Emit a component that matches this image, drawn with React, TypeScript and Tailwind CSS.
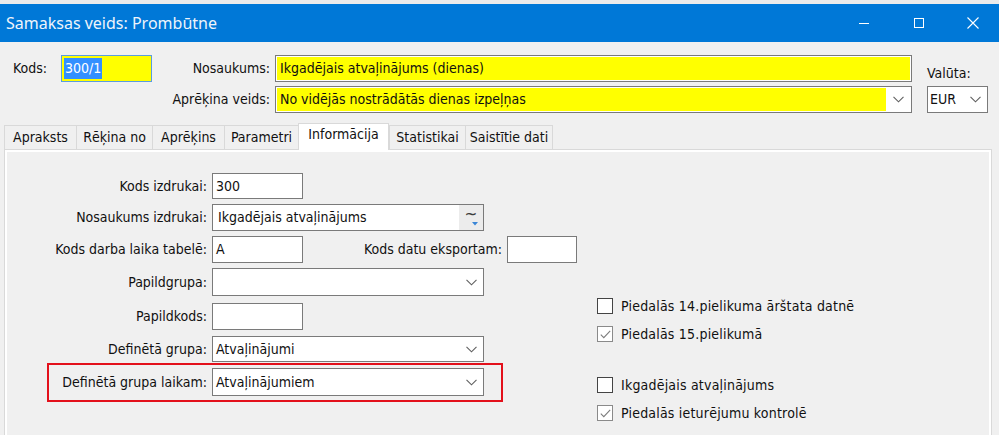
import { ReactNode } from "react";

// Thin grey chevron used by every combo box
function Chevron() {
  return (
    <svg width="11" height="7" viewBox="0 0 11 7">
      <polyline points="0.5,0.8 5.5,5.8 10.5,0.8" fill="none" stroke="#5f5f5f" strokeWidth="1.1" />
    </svg>
  );
}

function TextBox({ width, value, className }: { width: string; value?: string; className?: string }) {
  return (
    <div className={`${width} h-full border border-[#7a7a7a] bg-white flex items-center pl-[3px] ${className ?? ""}`}>
      {value}
    </div>
  );
}

function ComboBox({ value }: { value?: string }) {
  return (
    <div className="w-[272px] h-full border border-[#7a7a7a] bg-white flex items-center pl-[3px] pr-[6px]">
      <span className="flex-1">{value}</span>
      <Chevron />
    </div>
  );
}

function Label({ children, width }: { children: ReactNode; width: string }) {
  return <div className={`${width} shrink-0 text-right pr-[5px]`}>{children}</div>;
}

function CheckBox({ checked, label, className }: { checked?: boolean; label: string; className?: string }) {
  return (
    <div className={`flex items-center h-[16px] gap-[8px] ${className ?? ""}`}>
      <div
        className={`w-[16px] h-[16px] bg-white border flex items-center justify-center ${
          checked ? "border-[#8a8a8a]" : "border-[#444444]"
        }`}
      >
        {checked && (
          <svg width="11" height="9" viewBox="0 0 11 9">
            <polyline points="0.8,4.6 3.8,7.6 10.2,0.8" fill="none" stroke="#7c7c7c" strokeWidth="1.1" />
          </svg>
        )}
      </div>
      <span className="tracking-[0.2px]">{label}</span>
    </div>
  );
}

const tabs = [
  { label: "Apraksts", w: "w-[72px]" },
  { label: "Rēķina no", w: "w-[76px]" },
  { label: "Aprēķins", w: "w-[72px]" },
  { label: "Parametri", w: "w-[74px]" },
  { label: "Informācija", w: "w-[91px]", active: true },
  { label: "Statistikai", w: "w-[76px]" },
  { label: "Saistītie dati", w: "w-[88px]" },
];

export default function App() {
  return (
    <div className="w-[999px] h-[435px] overflow-hidden bg-[#f0f0f0] text-[14px] leading-[17px] text-[#111111] font-['DejaVu_Sans_Condensed','Liberation_Sans',sans-serif]">
      {/* window frame top */}
      <div className="h-[4px] bg-[#ebebeb]" />

      {/* title bar */}
      <div className="h-[38px] bg-[#0078d7] flex items-center">
        <span className="flex-1 pl-[6px] text-[16px] text-[#eef4fb] font-['Noto_Sans','Open_Sans',sans-serif]">
          Samaksas veids: Prombūtne
        </span>
        <div className="w-[55px] h-full flex items-center justify-center">
          <div className="w-[10px] h-[1px] bg-white" />
        </div>
        <div className="w-[55px] h-full flex items-center justify-center">
          <div className="w-[10px] h-[10px] border border-white" />
        </div>
        <div className="w-[53px] h-full flex items-center justify-center">
          <svg width="12" height="12" viewBox="0 0 12 12">
            <path d="M0.5 0.5 L11.5 11.5 M11.5 0.5 L0.5 11.5" stroke="white" strokeWidth="1.1" />
          </svg>
        </div>
      </div>

      {/* header fields */}
      <div className="flex pt-[13px]">
        <div className="flex flex-col gap-[4px]">
          <div className="flex h-[27px] items-center">
            <div className="w-[61px] pl-[13px]">Kods:</div>
            <div className="w-[91px] h-full border border-[#5a9de0] bg-[#ffff00] flex items-center pl-[2px]">
              <span className="bg-[#3390ff] text-white h-[21px] leading-[21px] px-[1px]">300/1</span>
            </div>
            <Label width="w-[123px]">Nosaukums:</Label>
            <div className="w-[637px] h-full border border-[#7a7a7a] bg-white p-[1px]">
              <div className="h-full bg-[#ffff00] flex items-center pl-[3px]">Ikgadējais atvaļinājums (dienas)</div>
            </div>
          </div>
          <div className="flex h-[27px] items-center">
            <Label width="w-[275px]">Aprēķina veids:</Label>
            <div className="w-[637px] h-full border border-[#7a7a7a] bg-white p-[1px] flex">
              <div className="flex-1 h-full bg-[#ffff00] flex items-center pl-[3px]">
                No vidējās nostrādātās dienas izpeļņas
              </div>
              <div className="w-[24px] flex items-center justify-center">
                <Chevron />
              </div>
            </div>
          </div>
        </div>
        <div className="ml-[15px] flex flex-col">
          <div className="h-[31px] flex items-end pb-[4px]">Valūta:</div>
          <div className="w-[61px] h-[27px] border border-[#7a7a7a] bg-white flex items-center pl-[2px] pr-[6px]">
            <span className="flex-1">EUR</span>
            <Chevron />
          </div>
        </div>
      </div>

      {/* tabs */}
      <div className="flex items-end h-[26px] mt-[10px] pl-[4px]">
        {tabs.map((t, i) =>
          t.active ? (
            <div
              key={t.label}
              className={`${t.w} h-[27px] mb-[-1px] relative z-10 bg-white border border-b-0 border-[#d9d9d9] flex items-center justify-center pb-[5px]`}
            >
              {t.label}
            </div>
          ) : (
            <div
              key={t.label}
              className={`${t.w} h-[24px] border-t border-l border-[#d9d9d9] ${
                i === tabs.length - 1 ? "border-r" : ""
              } bg-[#f0f0f0] flex items-center justify-center`}
            >
              {t.label}
            </div>
          )
        )}
      </div>

      {/* tab page */}
      <div className="ml-[4px] w-[988px] h-[300px] border border-[#d9d9d9] bg-white p-[2px]">
        <div className="h-full bg-[#f0f0f0] flex">
          <div className="flex flex-col pt-[21px] w-[570px]">
            <div className="flex h-[26px] items-center">
              <Label width="w-[205px]">Kods izdrukai:</Label>
              <TextBox width="w-[91px]" value="300" />
            </div>
            <div className="flex h-[27px] items-center mt-[5px]">
              <Label width="w-[205px]">Nosaukums izdrukai:</Label>
              <div className="w-[272px] h-full border border-[#7a7a7a] bg-white flex">
                <div className="flex-1 flex items-center pl-[5px]">Ikgadējais atvaļinājums</div>
                <div className="w-[24px] bg-[#ececec] relative flex justify-center">
                  <span className="text-[17px] leading-[17px] text-[#3c3c3c] mt-[1px]">~</span>
                  <svg width="6" height="4" viewBox="0 0 6 4" className="absolute right-[5px] bottom-[4px]">
                    <polygon points="0,0 6,0 3,3.5" fill="#3a86d6" />
                  </svg>
                </div>
              </div>
            </div>
            <div className="flex h-[27px] items-center mt-[5px]">
              <Label width="w-[205px]">Kods darba laika tabelē:</Label>
              <TextBox width="w-[91px]" value="A" />
              <Label width="w-[204px]">Kods datu eksportam:</Label>
              <TextBox width="w-[70px]" />
            </div>
            <div className="flex h-[28px] items-center mt-[5px]">
              <Label width="w-[205px]">Papildgrupa:</Label>
              <ComboBox />
            </div>
            <div className="flex h-[27px] items-center mt-[7px]">
              <Label width="w-[205px]">Papildkods:</Label>
              <TextBox width="w-[91px]" />
            </div>
            <div className="flex h-[26px] items-center mt-[6px]">
              <Label width="w-[205px]">Definētā grupa:</Label>
              <ComboBox value="Atvaļinājumi" />
            </div>
            <div className="ml-[40px] w-[456px] mt-[1px] border-2 border-[#e3101b] pt-[3px] pb-[4px]">
              <div className="flex h-[28px] items-center">
                <Label width="w-[163px]">Definētā grupa laikam:</Label>
                <ComboBox value="Atvaļinājumiem" />
              </div>
            </div>
          </div>

          <div className="flex flex-col pt-[146px] ml-[20px]">
            <CheckBox label="Piedalās 14.pielikuma ārštata datnē" />
            <CheckBox checked label="Piedalās 15.pielikumā" className="mt-[12px]" />
            <CheckBox label="Ikgadējais atvaļinājums" className="mt-[35px]" />
            <CheckBox checked label="Piedalās ieturējumu kontrolē" className="mt-[12px]" />
          </div>
        </div>
      </div>
    </div>
  );
}
